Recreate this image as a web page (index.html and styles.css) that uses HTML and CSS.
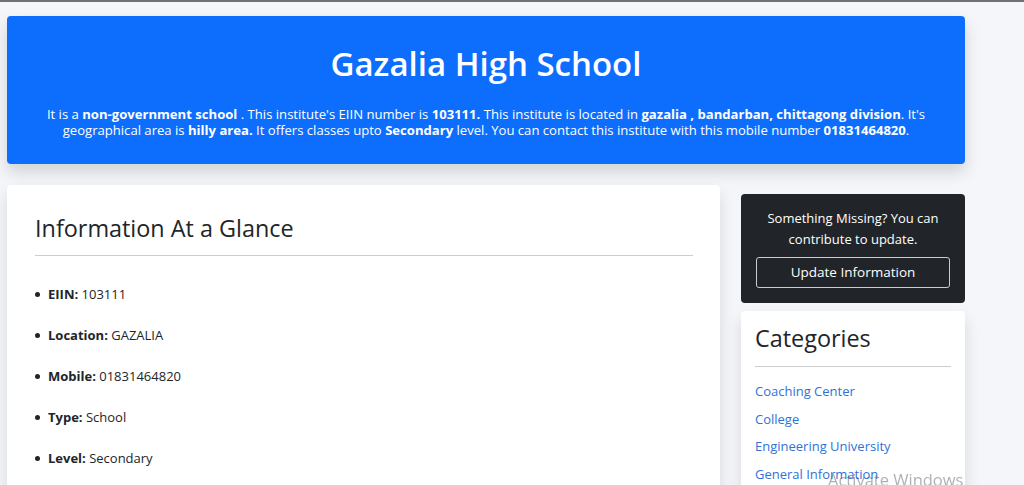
FILE: index.html
```html
<!DOCTYPE html>
<html lang="en">
<head>
<meta charset="utf-8">
<title>Gazalia High School</title>
<link rel="stylesheet" href="styles.css">
</head>
<body>
<div class="page">
  <header class="hero">
    <h1 class="hero-title">Gazalia High School</h1>
    <p class="hero-text">It is a <b>non-government school</b> . This institute's EIIN number is <b>103111.</b> This institute is located in <b>gazalia , bandarban, chittagong division</b>. It's geographical area is <b>hilly area.</b> It offers classes upto <b>Secondary</b> level. You can contact this institute with this mobile number <b>01831464820</b>.</p>
  </header>
  <div class="layout">
    <main class="card info">
      <h2 class="card-title">Information At a Glance</h2>
      <hr class="rule">
      <ul class="facts">
        <li><b>EIIN:</b> 103111</li>
        <li><b>Location:</b> GAZALIA</li>
        <li><b>Mobile:</b> 01831464820</li>
        <li><b>Type:</b> School</li>
        <li><b>Level:</b> Secondary</li>
      </ul>
    </main>
    <aside class="sidebar">
      <div class="contrib">
        <p class="contrib-text">Something Missing? You can contribute to update.</p>
        <a class="contrib-btn" href="#">Update Information</a>
      </div>
      <div class="card cats">
        <h3 class="cats-title">Categories</h3>
        <hr class="rule rule-cats">
        <ul class="cat-list">
          <li><a href="#">Coaching Center</a></li>
          <li><a href="#">College</a></li>
          <li><a href="#">Engineering University</a></li>
          <li><a href="#">General Information</a></li>
        </ul>
      </div>
    </aside>
  </div>
</div>
<div class="watermark">Activate Windows</div>
</body>
</html>
```
FILE: styles.css
```css
html, body {
  margin: 0;
  padding: 0;
}
body {
  border-top: 2px solid #707070;
  background: #f4f6f9;
  font-family: "Open Sans", "Noto Sans", sans-serif;
  color: #212529;
  overflow: hidden;
}
.page {
  width: 958px;
  margin-left: 7px;
  padding-top: 14px;
}
.hero {
  background: #0d6efd;
  color: #fff;
  border-radius: 4px;
  box-shadow: 0 8px 16px rgba(0, 0, 0, 0.15);
  padding: 29px 20px 26px;
  text-align: center;
}
.hero-title {
  margin: 0 0 23px;
  font-size: 33px;
  font-weight: 600;
  line-height: 38px;
}
.hero-text {
  margin: 0;
  font-size: 13.1px;
  line-height: 16px;
}
.hero-text b {
  font-weight: 700;
}
.layout {
  display: grid;
  grid-template-columns: 713px 224px;
  column-gap: 21px;
  margin-top: 21px;
  align-items: start;
}
.card {
  background: #fff;
  border-radius: 4px;
  box-shadow: 0 8px 16px rgba(0, 0, 0, 0.12);
}
.info {
  padding: 29px 27px 30px 28px;
}
.card-title {
  margin: 0 0 12px;
  font-size: 23.4px;
  font-weight: 500;
  line-height: 29px;
}
.rule {
  border: 0;
  border-top: 1px solid #cbcdcf;
  margin: 0;
}
.facts {
  list-style: none;
  margin: 28px 0 0;
  padding: 0;
}
.facts li {
  position: relative;
  padding-left: 13px;
  font-size: 13px;
  line-height: 20px;
  margin-bottom: 21px;
}
.facts li::before {
  content: "";
  position: absolute;
  left: 0;
  top: 8px;
  width: 5px;
  height: 5px;
  border-radius: 50%;
  background: #212529;
}
.facts b {
  font-weight: 700;
}
.sidebar {
  display: flex;
  flex-direction: column;
  gap: 8px;
  padding-top: 9px;
}
.contrib {
  background: #212529;
  color: #fff;
  border-radius: 4px;
  padding: 14px 15px 15px;
  text-align: center;
}
.contrib-text {
  margin: 0 0 7px;
  font-size: 13px;
  line-height: 21px;
}
.contrib-btn {
  display: block;
  height: 29px;
  line-height: 29px;
  border: 1px solid #c9ccd0;
  border-radius: 3px;
  color: #fff;
  text-decoration: none;
  font-size: 13.5px;
}
.cats {
  padding: 13px 14px 20px;
}
.cats-title {
  margin: 0 0 13px;
  font-size: 23.4px;
  font-weight: 500;
  line-height: 29px;
}
.cat-list {
  list-style: none;
  margin: 14px 0 0;
  padding: 0;
}
.cat-list li {
  font-size: 13px;
  line-height: 20px;
  margin-bottom: 7.7px;
}
.cat-list a {
  color: #2f72d8;
  text-decoration: none;
}
.watermark {
  position: fixed;
  left: 828px;
  top: 469px;
  font-size: 16.5px;
  line-height: 22px;
  color: rgba(80, 80, 80, 0.45);
  pointer-events: none;
}
```
